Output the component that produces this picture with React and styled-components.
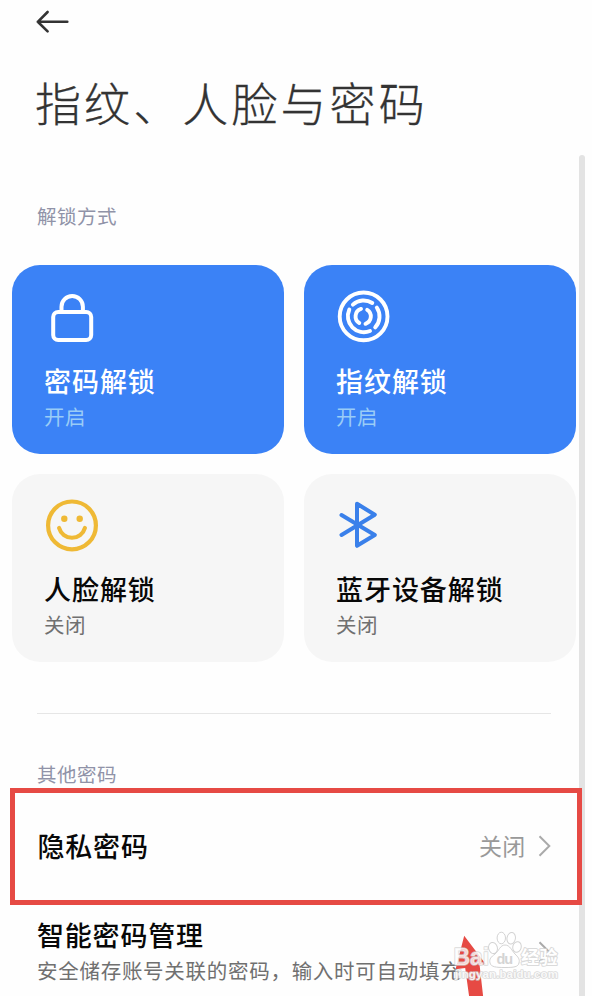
import * as React from "react"
import styled, { createGlobalStyle } from "styled-components"

const GlobalStyle = createGlobalStyle`
  * {
    box-sizing: border-box;
  }
  body {
    margin: 0;
    background: #fefefe;
    font-family: "Noto Sans CJK SC", "Noto Sans", sans-serif;
  }
  svg {
    display: block;
  }
`

const BackIcon = () => (
  <svg width="34" height="24" viewBox="0 0 34 24" fill="none">
    <path
      d="M32.3 11.8H2.8M12.6 2L2.8 11.8L12.6 21.4"
      stroke="#333"
      strokeWidth="2.6"
      strokeLinecap="round"
      strokeLinejoin="round"
    />
  </svg>
)

const LockIcon = () => (
  <svg width="54" height="54" viewBox="0 0 54 54" fill="none">
    <g stroke="#fff" strokeWidth="4">
      <rect x="9.2" y="22" width="38" height="28" rx="5" />
      <path d="M17.5 22V16.7a10.7 10.7 0 0 1 21.4 0V22" />
    </g>
  </svg>
)

const FingerprintIcon = () => (
  <svg width="54" height="54" viewBox="0 0 54 54" fill="none">
    <g stroke="#fff" strokeWidth="3.9" strokeLinecap="round">
      <circle cx="27.6" cy="26.4" r="23.9" />
      <path d="M16.9 14.6A16 16 0 0 1 36.3 13" />
      <path d="M40.8 17.5A16 16 0 0 1 39.2 37.4" />
      <path d="M13.3 19.6A16 16 0 0 0 34 41" />
      <path d="M25 18.9A7.8 7.8 0 0 0 23.3 33" />
      <path d="M31.2 19.8A7.8 7.8 0 0 1 29.5 33.8" />
    </g>
  </svg>
)

const FaceIcon = () => (
  <svg width="54" height="54" viewBox="0 0 54 54" fill="none">
    <g stroke="#efb935" strokeWidth="4.2" strokeLinecap="round">
      <circle cx="28" cy="26.4" r="23.9" />
      <path d="M15.1 29a13.4 13.4 0 0 0 25.8 0" />
    </g>
    <circle cx="20.3" cy="19.8" r="3.2" fill="#efb935" />
    <circle cx="35.7" cy="19.8" r="3.2" fill="#efb935" />
  </svg>
)

const BluetoothIcon = () => (
  <svg width="54" height="54" viewBox="0 0 54 54" fill="none">
    <path
      d="M5.5 16L38.8 36L21 46.8V4.8L38.8 15.7L5.5 36"
      stroke="#3a80ea"
      strokeWidth="4"
      strokeLinecap="round"
      strokeLinejoin="round"
    />
  </svg>
)

const ChevronIcon = () => (
  <svg width="14" height="24" viewBox="0 0 14 24" fill="none">
    <path d="M1.5 2.2L11.3 12L1.5 21.8" stroke="#aaa" strokeWidth="2" />
  </svg>
)

const PointerArrow = () => (
  <svg width="32" height="62" viewBox="0 0 32 62">
    <path
      d="M9.2 .8L30.8 29.2L24.6 30.2L28.2 62H14.2L10.2 33L.6 34.2Z"
      fill="#e64a44"
    />
  </svg>
)

const Watermark = () => (
  <svg width="112" height="54" viewBox="0 0 112 54">
    <g
      fill="#fff"
      fillOpacity="0.5"
      stroke="#cbcbcb"
      strokeOpacity="0.85"
      strokeWidth="1"
    >
      <ellipse cx="42" cy="18" rx="4.4" ry="5.6" transform="rotate(-14 42 18)" />
      <ellipse cx="50.3" cy="8" rx="4.2" ry="5.8" />
      <ellipse cx="60.2" cy="8.3" rx="4.2" ry="5.8" transform="rotate(10 60.2 8.3)" />
      <ellipse cx="66" cy="17" rx="4.2" ry="5.4" transform="rotate(14 66 17)" />
      <path d="M54 15c5 0 7 6 10 9s5 5 4 9-5 4.500-14 4.500-14-.5-15-4.500 1-6 5-9 5-9 10-9Z" />
    </g>
    <g
      fontFamily="Liberation Sans, Noto Sans CJK SC, sans-serif"
      fontWeight="700"
      strokeLinejoin="round"
      paintOrder="stroke"
    >
      <g fill="#fff" stroke="#cfcfcf" strokeOpacity="0.75">
        <text
          x="2.5"
          y="35.3"
          fontSize="24.5"
          textLength="35.5"
          lengthAdjust="spacingAndGlyphs"
          strokeWidth="1.6"
          fillOpacity="0.75"
        >
          Bai
        </text>
        <text x="70" y="34" fontSize="18" textLength="36.500" strokeWidth="2">
          经验
        </text>
        <text
          x="4"
          y="48"
          fontSize="11.5"
          textLength="103"
          strokeWidth="1.6"
          fillOpacity="0.85"
        >
          jingyan.baidu.com
        </text>
      </g>
      <text x="45.5" y="34" fontSize="14.5" textLength="16.500" fill="#d4d4d4">
        du
      </text>
    </g>
  </svg>
)

const methods = [
  { title: "密码解锁", status: "开启", icon: <LockIcon />, active: true },
  { title: "指纹解锁", status: "开启", icon: <FingerprintIcon />, active: true },
  { title: "人脸解锁", status: "关闭", icon: <FaceIcon /> },
  { title: "蓝牙设备解锁", status: "关闭", icon: <BluetoothIcon /> },
]

const App = () => (
  <Page>
    <GlobalStyle />
    <Header>
      <BackButton aria-label="返回">
        <BackIcon />
      </BackButton>
      <Title>指纹、人脸与密码</Title>
    </Header>
    <SectionLabel>解锁方式</SectionLabel>
    <CardGrid>
      {methods.map(({ title, status, icon, active }) => (
        <Card key={title} $active={active}>
          {icon}
          <CardTitle>{title}</CardTitle>
          <CardStatus $active={active}>{status}</CardStatus>
        </Card>
      ))}
    </CardGrid>
    <Divider />
    <SectionLabel>其他密码</SectionLabel>
    <HighlightedRow>
      <RowTitle>隐私密码</RowTitle>
      <RowValue>
        <span>关闭</span>
        <ChevronIcon />
      </RowValue>
    </HighlightedRow>
    <Row>
      <div>
        <RowTitle>智能密码管理</RowTitle>
        <RowText>安全储存账号关联的密码，输入时可自动填充</RowText>
      </div>
      <ChevronIcon />
    </Row>
    <ScrollThumb />
    <ArrowLayer>
      <PointerArrow />
    </ArrowLayer>
    <WatermarkLayer>
      <Watermark />
    </WatermarkLayer>
  </Page>
)

const Page = styled.main`
  position: relative;
  isolation: isolate;
  width: 592px;
  height: 996px;
  overflow: hidden;
  background: #fefefe;
`
const Header = styled.header`
  height: 202px;
  padding: 10px 35px 0;
`
const BackButton = styled.button`
  display: block;
  padding: 0;
  border: 0;
  background: none;
`
const Title = styled.h1`
  margin: 34px 0 0;
  font-size: 46px;
  line-height: 66px;
  font-weight: 300;
  letter-spacing: 3.1px;
  color: #333;
  -webkit-text-stroke: 0.3px #333;
`
const SectionLabel = styled.h2`
  margin: 0;
  padding-left: 37px;
  font-size: 19.5px;
  line-height: 28px;
  font-weight: 400;
  letter-spacing: 0.5px;
  color: #9093a8;
`
const CardGrid = styled.div`
  display: grid;
  grid-template-columns: 272px 272px;
  grid-auto-rows: 188.5px;
  gap: 20px;
  padding: 35px 12px 0;
`
const Card = styled.section`
  display: flex;
  flex-flow: column nowrap;
  padding: 25px 32px 0;
  border-radius: 28px;
  color: ${({ $active }) => ($active ? "#fff" : "#080808")};
  background: ${({ $active }) => ($active ? "#3b82f6" : "#f6f6f6")};
`
const CardTitle = styled.h3`
  margin: 17.5px 0 0;
  font-size: 27px;
  line-height: 37px;
  font-weight: 500;
  letter-spacing: 0.95px;
`
const CardStatus = styled.span`
  font-size: 20.5px;
  line-height: 34px;
  letter-spacing: 0.4px;
  color: ${({ $active }) => ($active ? "#9accf6" : "#707070")};
`
const Divider = styled.hr`
  height: 1px;
  margin: 51px 41px 46px 37px;
  border: 0;
  background: #e6e6e6;
`
const HighlightedRow = styled.div`
  display: flex;
  align-items: center;
  justify-content: space-between;
  width: 572px;
  height: 117px;
  margin-left: 9.5px;
  padding: 0 25px 2px 23px;
  border: 5px solid #e64a44;
`
const Row = styled.div`
  display: flex;
  align-items: center;
  justify-content: space-between;
  padding: 11px 40px 0 37px;
`
const RowTitle = styled.h3`
  margin: 0;
  font-size: 27px;
  line-height: 37px;
  font-weight: 500;
  letter-spacing: 0.8px;
  color: #080808;
`
const RowValue = styled.span`
  display: flex;
  align-items: center;
  gap: 12px;
  font-size: 23px;
  letter-spacing: 0.2px;
  color: #999;
  span {
    padding-bottom: 2px;
  }
`
const RowText = styled.p`
  margin: 0;
  font-size: 20.5px;
  line-height: 34px;
  letter-spacing: 0.72px;
  white-space: nowrap;
  color: #707070;
`
const ScrollThumb = styled.div`
  position: absolute;
  z-index: -1;
  top: 155px;
  right: 7px;
  bottom: 0;
  width: 6px;
  border-radius: 3px 3px 0 0;
  background: #e3e3e3;
`
const ArrowLayer = styled.div`
  position: absolute;
  left: 454.5px;
  top: 934.5px;
`
const WatermarkLayer = styled.div`
  position: absolute;
  left: 451px;
  top: 930px;
`

export default App
